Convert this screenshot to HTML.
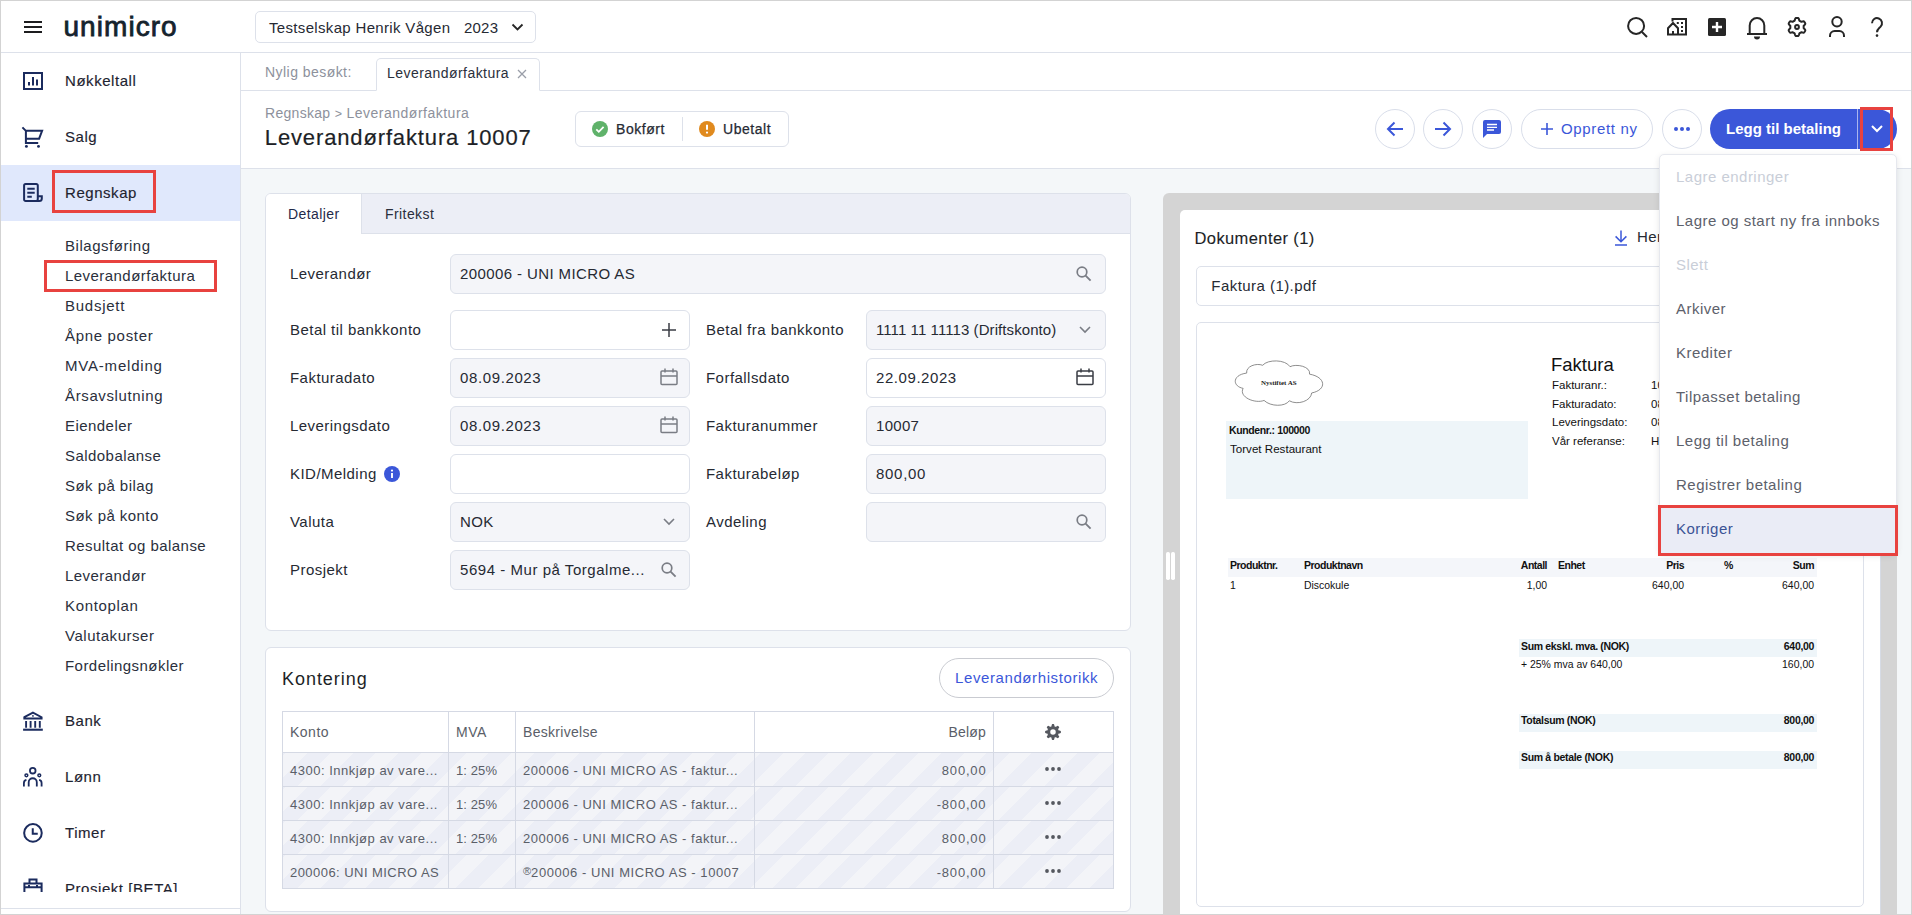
<!DOCTYPE html>
<html lang="no">
<head>
<meta charset="utf-8">
<title>Leverandørfaktura 10007</title>
<style>
*{box-sizing:border-box;margin:0;padding:0}
html,body{width:1912px;height:915px;overflow:hidden;background:#fff}
body{font-family:"Liberation Sans",sans-serif;color:#262a33;position:relative;font-size:15px}
.abs{position:absolute}
.t{position:absolute;white-space:nowrap;line-height:1}
svg{position:absolute;overflow:visible}
/* frame */
#frame{position:absolute;left:0;top:0;width:1912px;height:915px;border:1px solid #d3d3d3;z-index:100;pointer-events:none}
/* top bar */
#topbar{position:absolute;left:0;top:0;width:1912px;height:53px;background:#fff;border-bottom:1px solid #dde1ea}
#company{position:absolute;left:255px;top:11px;width:281px;height:32px;border:1px solid #dde1ea;border-radius:5px;background:#fff}
/* sidebar */
#sidebar{position:absolute;left:0;top:53px;width:240px;height:856px;background:#fff;border-bottom:1px solid #dde1ea;overflow:hidden}
#sideline{position:absolute;left:240px;top:53px;width:1px;height:862px;background:#dde1ea;z-index:5}
#sideclip{position:absolute;left:0;top:0;width:240px;height:838.7px;overflow:hidden}
.nav{position:absolute;left:65px;font-size:15px;color:#1e2330;white-space:nowrap;line-height:20px;letter-spacing:.55px;-webkit-text-stroke:.15px #1e2330;margin-top:1px}
.sub{position:absolute;left:65px;font-size:15px;color:#2a2f3c;white-space:nowrap;line-height:20px;letter-spacing:.45px;margin-top:1px}
.redbox{position:absolute;border:3px solid #e8423f;z-index:60}
/* main */
#main{position:absolute;left:241px;top:53px;width:1671px;height:862px;background:#f4f7f9;overflow:hidden}
#tabbar{position:absolute;left:0;top:0;width:1671px;height:38px;background:#fff;border-bottom:1px solid #dde1ea}
#rtab{position:absolute;left:135px;top:5px;width:164px;height:33px;border:1px solid #dde1ea;border-bottom:1px solid #fff;border-radius:5px 5px 0 0;background:#fff}
#header{position:absolute;left:0;top:38px;width:1671px;height:78px;background:#fff;border-bottom:1px solid #dde1ea}
.card{position:absolute;background:#fff;border:1px solid #dde1ea;border-radius:6px}
.inp{position:absolute;height:40px;border:1px solid #dde1ea;border-radius:6px;background:#fff}
.inp.dis{background:#f4f5f9}
.lbl{position:absolute;font-size:15px;color:#262a33;white-space:nowrap;line-height:20px;letter-spacing:.46px;margin-top:-.5px}
.val{position:absolute;left:9px;top:8.5px;font-size:15px;color:#262a33;white-space:nowrap;line-height:20px;letter-spacing:.4px}
.tdrow{margin-top:.7px}
.circ{position:absolute;width:40px;height:40px;border:1px solid #d9deea;border-radius:20px;background:#fff}
</style>
</head>
<body>
<div id="topbar">
<svg style="left:24px;top:21px" width="18" height="12" viewBox="0 0 18 12"><path d="M0 1h18M0 6h18M0 11h18" stroke="#1d1d1f" stroke-width="2" fill="none"/></svg>
<div class="t" id="logo" style="left:63.5px;top:10.8px;font-size:28px;font-weight:400;color:#15232d;letter-spacing:1.05px;line-height:32px;-webkit-text-stroke:.8px #15232d">unimicro</div>
<div id="company">
<div class="t" style="left:13px;top:6.5px;font-size:15px;line-height:17px;color:#262a33;letter-spacing:.33px">Testselskap Henrik Vågen</div>
<div class="t" style="left:208px;top:6.5px;font-size:15px;line-height:17px;color:#262a33;letter-spacing:.2px">2023</div>
<svg style="left:254.500px;top:10.500px" width="13" height="9" viewBox="0 0 13 9"><path d="M1.500 1.500l5 5 5-5" stroke="#262626" stroke-width="1.800" fill="none"/></svg>
</div>
<!-- search -->
<svg style="left:1626px;top:16px" width="22" height="22" viewBox="1626 16 22 22"><circle cx="1636.1" cy="25.9" r="8" fill="none" stroke="#262626" stroke-width="2"/><path d="M1642 32l5 5" stroke="#262626" stroke-width="2" fill="none"/></svg>
<!-- building -->
<svg style="left:1666px;top:17px" width="22" height="20" viewBox="1666 17 22 20"><path d="M1672.5 21.5V19H1686V34.6H1668V28.2L1673 23l5 5.2V34.6M1673 31v3.6" stroke="#262626" stroke-width="2" fill="none"/><path d="M1676.8 22h2v2h-2zM1681 22h2v2h-2zM1681 26h2v2h-2zM1681 30h2v2h-2z" fill="#262626"/></svg>
<!-- plus box -->
<div class="abs" style="left:1708px;top:18px;width:18px;height:18px;border-radius:1.5px;background:#262626"></div>
<svg style="left:1708px;top:18px" width="18" height="18" viewBox="0 0 18 18"><path d="M4 9h10M9 4v10" stroke="#fff" stroke-width="2.4" fill="none"/></svg>
<!-- bell -->
<svg style="left:1746px;top:16px" width="22" height="24" viewBox="1746 16 22 24"><path d="M1747 34h20M1749.7 34v-8.6a7.3 7.3 0 0 1 14.6 0V34" stroke="#262626" stroke-width="2" fill="none"/><path d="M1754 36.4h6a3 3 0 0 1-6 0z" fill="#262626"/></svg>
<!-- gear -->
<svg style="left:1786px;top:16px" width="22" height="22" viewBox="-11 -11 22 22"><path d="M0.0 -9.0L0.6 -9.0L1.2 -8.9L1.7 -8.5L2.0 -7.6L2.3 -6.6L2.6 -6.2L3.0 -6.0L3.3 -5.8L3.7 -5.6L4.1 -5.3L4.6 -5.3L5.6 -5.6L6.5 -5.7L7.1 -5.5L7.5 -5.0L7.8 -4.5L8.1 -4.0L8.3 -3.4L8.2 -2.8L7.6 -2.0L6.9 -1.4L6.6 -0.9L6.7 -0.4L6.7 -0.0L6.7 0.4L6.6 0.9L6.9 1.4L7.6 2.0L8.2 2.8L8.3 3.4L8.1 4.0L7.8 4.5L7.5 5.0L7.1 5.5L6.5 5.7L5.6 5.6L4.6 5.3L4.1 5.3L3.7 5.6L3.3 5.8L3.0 6.0L2.6 6.2L2.3 6.6L2.0 7.6L1.7 8.5L1.2 8.9L0.6 9.0L0.0 9.0L-0.6 9.0L-1.2 8.9L-1.7 8.5L-2.0 7.6L-2.3 6.6L-2.6 6.2L-3.0 6.0L-3.3 5.8L-3.7 5.6L-4.1 5.3L-4.6 5.3L-5.6 5.6L-6.5 5.7L-7.1 5.5L-7.5 5.0L-7.8 4.5L-8.1 4.0L-8.3 3.4L-8.2 2.8L-7.6 2.0L-6.9 1.4L-6.6 0.9L-6.7 0.4L-6.7 0.0L-6.7 -0.4L-6.6 -0.9L-6.9 -1.4L-7.6 -2.0L-8.2 -2.8L-8.3 -3.4L-8.1 -4.0L-7.8 -4.5L-7.5 -5.0L-7.1 -5.5L-6.5 -5.7L-5.6 -5.6L-4.6 -5.3L-4.1 -5.3L-3.7 -5.6L-3.4 -5.8L-3.0 -6.0L-2.6 -6.2L-2.3 -6.6L-2.0 -7.6L-1.7 -8.5L-1.2 -8.9L-0.6 -9.0Z" stroke="#262626" stroke-width="2" fill="none" stroke-linejoin="round"/><circle r="1.9" fill="none" stroke="#262626" stroke-width="2"/></svg>
<!-- user -->
<svg style="left:1828px;top:15px" width="18" height="23" viewBox="1828 15 18 23"><circle cx="1837" cy="21.8" r="4.7" fill="none" stroke="#262626" stroke-width="2"/><path d="M1830 37v-1.3a4.6 4.6 0 0 1 4.6-4.6h4.8a4.6 4.6 0 0 1 4.6 4.6V37" stroke="#262626" stroke-width="2" fill="none"/></svg>
<!-- help -->
<svg style="left:1870px;top:16px" width="14" height="22" viewBox="1870 16 14 22"><path d="M1872 23.2a5 5 0 1 1 8.6 3.4c-2 2-3.6 3-3.6 5.6" stroke="#262626" stroke-width="2" fill="none"/><circle cx="1877" cy="35.6" r="1.3" fill="#262626"/></svg>
</div>
<div id="sidebar"><div id="sideclip">
<div class="abs" style="left:0;top:112px;width:240px;height:56px;background:#e0e8fc"></div>
<div class="nav" style="top:17px">Nøkkeltall</div>
<div class="nav" style="top:73px">Salg</div>
<div class="nav" style="top:129px">Regnskap</div>
<div class="nav" style="top:657px">Bank</div>
<div class="nav" style="top:713px">Lønn</div>
<div class="nav" style="top:769px">Timer</div>
<div class="nav" style="top:825px">Prosjekt [BETA]</div>
<div class="sub" style="top:182px;letter-spacing:0.53px">Bilagsføring</div>
<div class="sub" style="top:212px">Leverandørfaktura</div>
<div class="sub" style="top:242px;letter-spacing:0.75px">Budsjett</div>
<div class="sub" style="top:272px;letter-spacing:0.68px">Åpne poster</div>
<div class="sub" style="top:302px;letter-spacing:0.8px">MVA-melding</div>
<div class="sub" style="top:332px;letter-spacing:0.63px">Årsavslutning</div>
<div class="sub" style="top:362px">Eiendeler</div>
<div class="sub" style="top:392px">Saldobalanse</div>
<div class="sub" style="top:422px">Søk på bilag</div>
<div class="sub" style="top:452px">Søk på konto</div>
<div class="sub" style="top:482px">Resultat og balanse</div>
<div class="sub" style="top:512px">Leverandør</div>
<div class="sub" style="top:542px;letter-spacing:0.65px">Kontoplan</div>
<div class="sub" style="top:572px;letter-spacing:0.53px">Valutakurser</div>
<div class="sub" style="top:602px">Fordelingsnøkler</div>
<svg style="left:22px;top:18px" width="22" height="20" viewBox="22 71 22 20" fill="none" stroke="#1b2b5e" stroke-width="2"><rect x="24" y="73" width="18" height="16"/><path d="M29 85.5v-3.5M33 85.5v-8.5M37 85.5v-6"/></svg>
<svg style="left:21px;top:73px" width="23" height="23" viewBox="21 126 23 23" fill="none" stroke="#1b2b5e" stroke-width="2"><path d="M22.400 127.400L25.900 130.800V143.100H38.200M25.900 130.800H42.100L39.100 138.700H25.900"/><circle cx="26.400" cy="146.400" r="1.450" fill="#1b2b5e" stroke="none"/><circle cx="38.500" cy="146.400" r="1.450" fill="#1b2b5e" stroke="none"/></svg>
<svg style="left:22px;top:129px" width="22" height="22" viewBox="22 182 22 22" fill="none" stroke="#1b2b5e" stroke-width="2"><path d="M37.800 196.200V185.400a1.500 1.500 0 0 0-1.500-1.500H25.600a1.500 1.500 0 0 0-1.500 1.500V199.600a1.500 1.500 0 0 0 1.500 1.500H39.300a2.500 2.500 0 0 0 2.500-2.500V196.200H37.800V199a2 2 0 0 1-2 2.100"/><path d="M27.300 188.800h7.400M27.300 192.800h7.400M27.300 196.700h4.500"/></svg>
<svg style="left:22px;top:656px" width="22" height="23" viewBox="22 709 22 23" fill="none" stroke="#1b2b5e" stroke-width="2"><path d="M24.300 717.200l8.650-4.600 8.650 4.600v1.300h-17.300z" stroke-width="1.900"/><path d="M26.100 721v6.800M30.600 721v6.800M35.200 721v6.800M39.800 721v6.800" stroke-width="1.900"/><path d="M23.100 729.700h19.700" stroke-width="2.100"/><circle cx="32.950" cy="715.900" r="0.850" fill="#1b2b5e" stroke="none"/></svg>
<svg style="left:22px;top:712px" width="22" height="23" viewBox="22 765 22 23" fill="none" stroke="#1b2b5e" stroke-width="2"><circle cx="32.750" cy="770.700" r="2.800" stroke-width="1.800"/><path d="M28.700 786.600v-4.300a4.050 4.050 0 0 1 8.100 0v4.300" stroke-width="1.800"/><circle cx="26.400" cy="775.300" r="1.400" stroke-width="1.500"/><circle cx="39.300" cy="775.300" r="1.400" stroke-width="1.500"/><path d="M23.900 786.600v-3.700a3.200 3.200 0 0 1 2.500-3.100M41.600 786.600v-3.700a3.200 3.200 0 0 0-2.500-3.100" stroke-width="1.800"/></svg>
<svg style="left:22px;top:768px" width="22" height="23" viewBox="22 821 22 23" fill="none" stroke="#1b2b5e" stroke-width="2"><circle cx="32.950" cy="832.900" r="8.800"/><path d="M32.750 828.300v5.400h5"/></svg>
<svg style="left:22px;top:824px" width="22" height="22" viewBox="22 877 22 22" fill="none" stroke="#1b2b5e" stroke-width="2"><path d="M24.400 883.400h17.200v12h-17.200zM29.500 883.400v-4h7v4M24.400 887.200h17.200M29 885v2.200M37 885v2.200"/></svg>
</div></div>
<div id="sideline"></div>
<div id="main">
<div id="tabbar">
<div class="t" style="left:24px;top:11px;font-size:14px;line-height:17px;color:#8d919c;letter-spacing:.45px">Nylig besøkt:</div>
<div id="rtab"><div class="t" style="left:10px;top:6px;font-size:14px;line-height:17px;color:#2a2f3c;letter-spacing:.45px">Leverandørfaktura</div><svg style="left:140px;top:10px" width="10" height="10" viewBox="0 0 10 10"><path d="M1 1l8 8M9 1l-8 8" stroke="#9a9ea8" stroke-width="1.3" fill="none"/></svg></div>
</div>
<div id="header">
<div class="t" style="left:24px;top:13px;font-size:14px;line-height:18px;color:#8d919c;letter-spacing:.3px">Regnskap <span style="font-size:12.500px;position:relative;top:-.3px">&gt;</span> <span style="letter-spacing:.5px">Leverandørfaktura</span></div>
<div class="t" style="left:23.8px;top:33px;font-size:22px;line-height:28px;color:#1d1f26;letter-spacing:.86px;-webkit-text-stroke:.2px #1d1f26">Leverandørfaktura 10007</div>
<div class="abs" style="left:334px;top:20px;width:214px;height:36px;border:1px solid #dde1ea;border-radius:6px"></div>
<svg style="left:351px;top:30px" width="16" height="16" viewBox="0 0 16 16"><circle cx="8" cy="8" r="8" fill="#5fb26a"/><path d="M4.300 8.300l2.500 2.500 4.800-5" stroke="#fff" stroke-width="1.800" fill="none"/></svg>
<div class="t" style="left:375px;top:29px;font-size:14px;line-height:18px;color:#262a33;letter-spacing:.55px;-webkit-text-stroke:.25px #262a33">Bokført</div>
<div class="abs" style="left:441px;top:26px;width:1px;height:24px;background:#dde1ea"></div>
<svg style="left:457.7px;top:30px" width="16" height="16" viewBox="0 0 16 16"><circle cx="8" cy="8" r="8" fill="#e08a1e"/><path d="M8 3.800v5" stroke="#fff" stroke-width="2" fill="none"/><circle cx="8" cy="11.600" r="1.100" fill="#fff"/></svg>
<div class="t" style="left:482px;top:29px;font-size:14px;line-height:18px;color:#262a33;letter-spacing:.55px;-webkit-text-stroke:.25px #262a33">Ubetalt</div>
<div class="circ" style="left:1134px;top:18px"></div>
<div class="circ" style="left:1182px;top:18px"></div>
<div class="circ" style="left:1231px;top:18px"></div>
<div class="circ" style="left:1421px;top:18px"></div>
<svg style="left:1145px;top:30px" width="18" height="16" viewBox="0 0 18 16"><path d="M17 8H2M8.500 1.500L2 8l6.500 6.500" stroke="#3b57d9" stroke-width="2" fill="none"/></svg>
<svg style="left:1193px;top:30px" width="18" height="16" viewBox="0 0 18 16"><path d="M1 8h15M9.500 1.500L16 8l-6.500 6.500" stroke="#3b57d9" stroke-width="2" fill="none"/></svg>
<svg style="left:1242px;top:29px" width="18" height="18" viewBox="0 0 18 18"><path d="M2 0h14a2 2 0 0 1 2 2v10a2 2 0 0 1-2 2H4l-4 4V2a2 2 0 0 1 2-2z" fill="#3b57d9"/><path d="M4 4.500h10M4 7.300h10M4 10h7" stroke="#fff" stroke-width="1.300"/></svg>
<div class="abs" style="left:1280px;top:18px;width:132px;height:40px;border:1px solid #d9deea;border-radius:20px;background:#fff"></div>
<svg style="left:1300px;top:32px" width="12" height="12" viewBox="0 0 12 12"><path d="M6 0v12M0 6h12" stroke="#3b57d9" stroke-width="1.600"/></svg>
<div class="t" style="left:1320px;top:28px;font-size:15px;line-height:20px;color:#3b57d9;letter-spacing:.65px">Opprett ny</div>
<svg style="left:1433px;top:36px" width="16" height="4" viewBox="0 0 16 4"><circle cx="2" cy="2" r="2" fill="#3b57d9"/><circle cx="8" cy="2" r="2" fill="#3b57d9"/><circle cx="14" cy="2" r="2" fill="#3b57d9"/></svg>
<div class="abs" style="left:1469px;top:18px;width:187px;height:40px;border-radius:20px;background:#3b57d9"></div>
<div class="abs" style="left:1616px;top:18px;width:1px;height:40px;background:#aab6ee"></div>
<div class="t" style="left:1485px;top:28px;font-size:15px;font-weight:700;line-height:20px;color:#fff;letter-spacing:0">Legg til betaling</div>
<svg style="left:1630px;top:34px" width="12" height="8" viewBox="0 0 12 8"><path d="M1 1l5 5 5-5" stroke="#fff" stroke-width="2" fill="none"/></svg>
</div>
<div class="card" style="left:24px;top:140px;width:866px;height:438px;overflow:hidden">
<div class="abs" style="left:0;top:0;width:864px;height:40px;background:#eceef6;border-bottom:1px solid #dde1ea"></div>
<div class="abs" style="left:0;top:0;width:96px;height:40px;background:#fff;border-right:1px solid #dde1ea"></div>
<div class="t" style="left:22px;top:10px;font-size:14px;line-height:20px;color:#1f2a4a;letter-spacing:.42px">Detaljer</div>
<div class="t" style="left:119px;top:10px;font-size:14px;line-height:20px;color:#2a2f3c;letter-spacing:.42px">Fritekst</div>
<div class="lbl" style="left:24px;top:70px">Leverandør</div>
<div class="lbl" style="left:24px;top:126px">Betal til bankkonto</div>
<div class="lbl" style="left:24px;top:174px">Fakturadato</div>
<div class="lbl" style="left:24px;top:222px">Leveringsdato</div>
<div class="lbl" style="left:24px;top:270px">KID/Melding</div>
<div class="lbl" style="left:24px;top:318px">Valuta</div>
<div class="lbl" style="left:24px;top:366px">Prosjekt</div>
<div class="lbl" style="left:440px;top:126px">Betal fra bankkonto</div>
<div class="lbl" style="left:440px;top:174px">Forfallsdato</div>
<div class="lbl" style="left:440px;top:222px">Fakturanummer</div>
<div class="lbl" style="left:440px;top:270px">Fakturabeløp</div>
<div class="lbl" style="left:440px;top:318px">Avdeling</div>
<div class="inp dis" style="left:184px;top:60px;width:656px"><div class="val">200006 - UNI MICRO AS</div></div><svg style="left:810px;top:72px" width="16" height="16" viewBox="0 0 16 16"><circle cx="6" cy="6" r="4.800" fill="none" stroke="#7a7d85" stroke-width="1.700"/><path d="M9.600 9.600l5 5" stroke="#7a7d85" stroke-width="1.800"/></svg>
<div class="inp" style="left:184px;top:116px;width:240px"><div class="val"></div></div><svg style="left:396px;top:129px" width="14" height="14" viewBox="0 0 14 14"><path d="M7 0v14M0 7h14" stroke="#3a3d44" stroke-width="1.500"/></svg>
<div class="inp dis" style="left:184px;top:164px;width:240px"><div class="val" style="letter-spacing:.62px">08.09.2023</div></div><svg style="left:394px;top:174px" width="18" height="18" viewBox="0 0 18 18" fill="none" stroke="#7a7d85" stroke-width="1.500"><rect x="1" y="3" width="16" height="13.500" rx="1"/><path d="M1 8h16M5 0.500v4M13 0.500v4"/></svg>
<div class="inp dis" style="left:184px;top:212px;width:240px"><div class="val" style="letter-spacing:.62px">08.09.2023</div></div><svg style="left:394px;top:222px" width="18" height="18" viewBox="0 0 18 18" fill="none" stroke="#7a7d85" stroke-width="1.500"><rect x="1" y="3" width="16" height="13.500" rx="1"/><path d="M1 8h16M5 0.500v4M13 0.500v4"/></svg>
<div class="inp" style="left:184px;top:260px;width:240px"><div class="val"></div></div>
<div class="inp dis" style="left:184px;top:308px;width:240px"><div class="val">NOK</div></div><svg style="left:397px;top:324px" width="12" height="8" viewBox="0 0 12 8"><path d="M1 1l5 5 5-5" stroke="#7a7d85" stroke-width="1.600" fill="none"/></svg>
<div class="inp dis" style="left:184px;top:356px;width:240px"><div class="val" style="letter-spacing:.54px">5694 - Mur på Torgalme...</div></div><svg style="left:395px;top:368px" width="16" height="16" viewBox="0 0 16 16"><circle cx="6" cy="6" r="4.800" fill="none" stroke="#7a7d85" stroke-width="1.700"/><path d="M9.600 9.600l5 5" stroke="#7a7d85" stroke-width="1.800"/></svg>
<div class="inp dis" style="left:600px;top:116px;width:240px"><div class="val" style="letter-spacing:.08px">1111 11 11113 (Driftskonto)</div></div><svg style="left:813px;top:132px" width="12" height="8" viewBox="0 0 12 8"><path d="M1 1l5 5 5-5" stroke="#7a7d85" stroke-width="1.600" fill="none"/></svg>
<div class="inp" style="left:600px;top:164px;width:240px"><div class="val" style="letter-spacing:.57px">22.09.2023</div></div><svg style="left:810px;top:174px" width="18" height="18" viewBox="0 0 18 18" fill="none" stroke="#3a3d44" stroke-width="1.500"><rect x="1" y="3" width="16" height="13.500" rx="1"/><path d="M1 8h16M5 0.500v4M13 0.500v4"/></svg>
<div class="inp dis" style="left:600px;top:212px;width:240px"><div class="val" style="letter-spacing:.3px">10007</div></div>
<div class="inp dis" style="left:600px;top:260px;width:240px"><div class="val" style="letter-spacing:.7px">800,00</div></div>
<div class="inp dis" style="left:600px;top:308px;width:240px"><div class="val"></div></div><svg style="left:810px;top:320px" width="16" height="16" viewBox="0 0 16 16"><circle cx="6" cy="6" r="4.800" fill="none" stroke="#7a7d85" stroke-width="1.700"/><path d="M9.600 9.600l5 5" stroke="#7a7d85" stroke-width="1.800"/></svg>
<svg style="left:118px;top:272px" width="16" height="16" viewBox="0 0 16 16"><circle cx="8" cy="8" r="8" fill="#3b57d9"/><circle cx="8" cy="4.600" r="1.100" fill="#fff"/><path d="M8 7v5" stroke="#fff" stroke-width="1.900"/></svg>
</div>
<div class="card" style="left:24px;top:594px;width:866px;height:265px;overflow:hidden">
<div class="t" style="left:16px;top:19px;font-size:18px;line-height:24px;color:#1d1f26;letter-spacing:.95px">Kontering</div>
<div class="abs" style="left:673px;top:10px;width:175px;height:40px;border:1px solid #c9cbd1;border-radius:20px;background:#fff"></div>
<div class="t" style="left:689px;top:20px;font-size:15px;line-height:20px;color:#3b57d9;letter-spacing:.6px">Leverandørhistorikk</div>
<div id="tbl" style="position:absolute;overflow:hidden;left:16px;top:63px;width:832px;height:178px;border:1px solid #d5d9e4;background:#fff">
<div class="abs" style="left:-42px;top:40px;width:872px;height:34px;background:repeating-linear-gradient(135deg,#f3f4f8 0 16px,#eceef6 16px 32px)"></div><div class="abs" style="left:-42px;top:74px;width:872px;height:34px;background:repeating-linear-gradient(135deg,#f3f4f8 0 16px,#eceef6 16px 32px)"></div><div class="abs" style="left:-42px;top:108px;width:872px;height:34px;background:repeating-linear-gradient(135deg,#f3f4f8 0 16px,#eceef6 16px 32px)"></div><div class="abs" style="left:-42px;top:142px;width:872px;height:34px;background:repeating-linear-gradient(135deg,#f3f4f8 0 16px,#eceef6 16px 32px)"></div>
<div class="abs" style="left:165px;top:0;width:1px;height:176px;background:#d5d9e4"></div>
<div class="abs" style="left:232px;top:0;width:1px;height:176px;background:#d5d9e4"></div>
<div class="abs" style="left:471px;top:0;width:1px;height:176px;background:#d5d9e4"></div>
<div class="abs" style="left:710px;top:0;width:1px;height:176px;background:#d5d9e4"></div>
<div class="abs" style="left:0;top:40px;width:830px;height:1px;background:#d5d9e4"></div>
<div class="abs" style="left:0;top:74px;width:830px;height:1px;background:#d5d9e4"></div>
<div class="abs" style="left:0;top:108px;width:830px;height:1px;background:#d5d9e4"></div>
<div class="abs" style="left:0;top:142px;width:830px;height:1px;background:#d5d9e4"></div>
<div class="t" style="left:7px;top:11px;font-size:14px;line-height:18px;color:#5a5e68;letter-spacing:.5px">Konto</div>
<div class="t" style="left:173px;top:11px;font-size:14px;line-height:18px;color:#5a5e68;letter-spacing:.5px">MVA</div>
<div class="t" style="left:240px;top:11px;font-size:14px;line-height:18px;color:#5a5e68;letter-spacing:.3px">Beskrivelse</div>
<div class="t" style="right:127px;top:11px;font-size:14px;line-height:18px;color:#5a5e68;letter-spacing:.2px">Beløp</div>
<div class="t" style="left:7px;top:49px;font-size:13px;line-height:18px;color:#5a5e68;margin-top:.7px;letter-spacing:.5px">4300: Innkjøp av vare...</div>
<div class="t" style="left:173px;top:49px;font-size:13px;line-height:18px;color:#5a5e68;margin-top:.7px;letter-spacing:.1px">1: 25%</div>
<div class="t" style="left:240px;top:49px;font-size:13px;line-height:18px;color:#5a5e68;margin-top:.7px;letter-spacing:.5px">200006 - UNI MICRO AS - faktur...</div>
<div class="t" style="right:126.6px;top:49px;font-size:13px;line-height:18px;color:#5a5e68;margin-top:.7px;letter-spacing:.8px">800,00</div>
<svg style="left:762px;top:55px" width="16" height="4" viewBox="0 0 16 4"><circle cx="2" cy="2" r="1.900" fill="#55585f"/><circle cx="8" cy="2" r="1.900" fill="#55585f"/><circle cx="14" cy="2" r="1.900" fill="#55585f"/></svg>
<div class="t" style="left:7px;top:83px;font-size:13px;line-height:18px;color:#5a5e68;margin-top:.7px;letter-spacing:.5px">4300: Innkjøp av vare...</div>
<div class="t" style="left:173px;top:83px;font-size:13px;line-height:18px;color:#5a5e68;margin-top:.7px;letter-spacing:.1px">1: 25%</div>
<div class="t" style="left:240px;top:83px;font-size:13px;line-height:18px;color:#5a5e68;margin-top:.7px;letter-spacing:.5px">200006 - UNI MICRO AS - faktur...</div>
<div class="t" style="right:126.6px;top:83px;font-size:13px;line-height:18px;color:#5a5e68;margin-top:.7px;letter-spacing:.8px">-800,00</div>
<svg style="left:762px;top:89px" width="16" height="4" viewBox="0 0 16 4"><circle cx="2" cy="2" r="1.900" fill="#55585f"/><circle cx="8" cy="2" r="1.900" fill="#55585f"/><circle cx="14" cy="2" r="1.900" fill="#55585f"/></svg>
<div class="t" style="left:7px;top:117px;font-size:13px;line-height:18px;color:#5a5e68;margin-top:.7px;letter-spacing:.5px">4300: Innkjøp av vare...</div>
<div class="t" style="left:173px;top:117px;font-size:13px;line-height:18px;color:#5a5e68;margin-top:.7px;letter-spacing:.1px">1: 25%</div>
<div class="t" style="left:240px;top:117px;font-size:13px;line-height:18px;color:#5a5e68;margin-top:.7px;letter-spacing:.5px">200006 - UNI MICRO AS - faktur...</div>
<div class="t" style="right:126.6px;top:117px;font-size:13px;line-height:18px;color:#5a5e68;margin-top:.7px;letter-spacing:.8px">800,00</div>
<svg style="left:762px;top:123px" width="16" height="4" viewBox="0 0 16 4"><circle cx="2" cy="2" r="1.900" fill="#55585f"/><circle cx="8" cy="2" r="1.900" fill="#55585f"/><circle cx="14" cy="2" r="1.900" fill="#55585f"/></svg>
<div class="t" style="left:7px;top:151px;font-size:13px;line-height:18px;color:#5a5e68;margin-top:.7px;letter-spacing:.45px">200006: UNI MICRO AS</div>
<div class="t" style="left:240px;top:151px;font-size:13px;line-height:18px;color:#5a5e68;margin-top:.7px;letter-spacing:.55px"><span style="font-size:11px;position:relative;top:-1.500px;letter-spacing:0;line-height:0">®</span>200006 - UNI MICRO AS - 10007</div>
<div class="t" style="right:126.6px;top:151px;font-size:13px;line-height:18px;color:#5a5e68;margin-top:.7px;letter-spacing:.8px">-800,00</div>
<svg style="left:762px;top:157px" width="16" height="4" viewBox="0 0 16 4"><circle cx="2" cy="2" r="1.900" fill="#55585f"/><circle cx="8" cy="2" r="1.900" fill="#55585f"/><circle cx="14" cy="2" r="1.900" fill="#55585f"/></svg>
<svg style="left:761px;top:11px" width="18" height="18" viewBox="-9.800 -9.800 19.600 19.600"><path d="M0.0 -8.6L0.4 -8.6L0.8 -8.6L1.2 -8.3L1.5 -7.3L1.6 -6.3L1.8 -6.0L2.1 -5.9L2.4 -5.8L2.7 -5.7L3.0 -5.6L3.3 -5.6L4.1 -6.2L5.0 -6.8L5.5 -6.6L5.8 -6.4L6.1 -6.1L6.4 -5.8L6.6 -5.5L6.8 -5.0L6.2 -4.1L5.6 -3.3L5.6 -3.0L5.7 -2.7L5.8 -2.4L5.9 -2.1L6.0 -1.8L6.3 -1.6L7.3 -1.5L8.3 -1.2L8.6 -0.8L8.6 -0.4L8.6 -0.0L8.6 0.4L8.6 0.8L8.3 1.2L7.3 1.5L6.3 1.6L6.0 1.8L5.9 2.1L5.8 2.4L5.7 2.7L5.6 3.0L5.6 3.3L6.2 4.1L6.8 5.0L6.6 5.5L6.4 5.8L6.1 6.1L5.8 6.4L5.5 6.6L5.0 6.8L4.1 6.2L3.3 5.6L3.0 5.6L2.7 5.7L2.4 5.8L2.1 5.9L1.8 6.0L1.6 6.3L1.5 7.3L1.2 8.3L0.8 8.6L0.4 8.6L0.0 8.6L-0.4 8.6L-0.8 8.6L-1.2 8.3L-1.5 7.3L-1.6 6.3L-1.8 6.0L-2.1 5.9L-2.4 5.8L-2.7 5.7L-3.0 5.6L-3.3 5.6L-4.1 6.2L-5.0 6.8L-5.5 6.6L-5.8 6.4L-6.1 6.1L-6.4 5.8L-6.6 5.5L-6.8 5.0L-6.2 4.1L-5.6 3.3L-5.6 3.0L-5.7 2.7L-5.8 2.4L-5.9 2.1L-6.0 1.8L-6.3 1.6L-7.3 1.5L-8.3 1.2L-8.6 0.8L-8.6 0.4L-8.6 0.0L-8.6 -0.4L-8.6 -0.8L-8.3 -1.2L-7.3 -1.5L-6.3 -1.6L-6.0 -1.8L-5.9 -2.1L-5.8 -2.4L-5.7 -2.7L-5.6 -3.0L-5.6 -3.3L-6.2 -4.1L-6.8 -5.0L-6.6 -5.5L-6.4 -5.8L-6.1 -6.1L-5.8 -6.4L-5.5 -6.6L-5.0 -6.8L-4.1 -6.2L-3.3 -5.6L-3.0 -5.6L-2.7 -5.7L-2.4 -5.8L-2.1 -5.9L-1.8 -6.0L-1.6 -6.3L-1.5 -7.3L-1.2 -8.3L-0.8 -8.6L-0.4 -8.6ZM0 -3A3 3 0 1 0 0 3A3 3 0 1 0 0 -3Z" fill="#55585f" fill-rule="evenodd"/></svg>
</div>
</div>
<div class="abs" style="left:922px;top:140px;width:734px;height:740px;background:#d4d4d4;border-radius:6px 0 0 0"></div>
<div class="abs" style="left:925px;top:498.700px;width:3.700px;height:28.500px;background:#fff;border-radius:1.800px"></div>
<div class="abs" style="left:929.900px;top:498.700px;width:3.700px;height:28.500px;background:#fff;border-radius:1.800px"></div>
<div class="abs" style="left:939px;top:157px;width:701px;height:720px;background:#fff;border-radius:5px 0 0 0;overflow:hidden;border-right:1px solid #d6dbe5">
<div class="t" style="left:15px;top:16px;font-size:16.500px;line-height:24px;color:#1d1f26;letter-spacing:.4px;-webkit-text-stroke:.1px #1d1f26;margin:0 0 0 -.5px">Dokumenter (1)</div>
<svg style="left:434px;top:20px" width="14" height="16" viewBox="0 0 14 16" fill="none" stroke="#3b57d9" stroke-width="1.500"><path d="M7 0.500v11M1.600 6.400l5.400 5.400 5.400-5.400M1 15h12"/></svg>
<div class="t" style="left:457px;top:17px;font-size:15px;line-height:20px;color:#262a33;letter-spacing:.4px">Hent</div>
<div class="abs" style="left:16px;top:56px;width:669px;height:40px;border:1px solid #dde1ea;border-radius:5px"></div>
<div class="t" style="left:32px;top:66px;font-size:15px;line-height:20px;color:#262a33;letter-spacing:.45px;margin-left:-.7px">Faktura (1).pdf</div>
<div class="abs" style="left:16px;top:112px;width:668px;height:585px;border:1px solid #dde1ea;border-radius:5px;background:#fff"></div>
<svg style="left:45px;top:140px" width="110" height="65" viewBox="0 0 1548 915"><path d="M305 325C290 230 440 180 530 215C600 130 850 130 915 235C1000 190 1210 230 1190 340C1420 380 1440 560 1220 605C1210 720 1020 780 905 715C850 800 640 800 550 710C420 760 190 660 255 540C100 510 100 350 305 325Z" fill="#fff" stroke="#6e6e6e" stroke-width="11"/><text x="757" y="490" font-family="Liberation Serif,serif" font-weight="700" font-size="98" text-anchor="middle" fill="#222">Nystiftet AS</text></svg>
<div class="t" style="left:371px;top:143px;font-family:'Liberation Sans',sans-serif;color:#111;font-size:18.500px;line-height:22px;margin-top:.8px">Faktura</div>
<div class="t" style="left:372px;top:169.0px;font-family:'Liberation Sans',sans-serif;color:#111;font-size:11.500px;line-height:13px">Fakturanr.:</div>
<div class="t" style="left:471px;top:169.0px;font-family:'Liberation Sans',sans-serif;color:#111;font-size:11.500px;line-height:13px">10007</div>
<div class="t" style="left:372px;top:187.5px;font-family:'Liberation Sans',sans-serif;color:#111;font-size:11.500px;line-height:13px">Fakturadato:</div>
<div class="t" style="left:471px;top:187.5px;font-family:'Liberation Sans',sans-serif;color:#111;font-size:11.500px;line-height:13px">08.09.2023</div>
<div class="t" style="left:372px;top:206.0px;font-family:'Liberation Sans',sans-serif;color:#111;font-size:11.500px;line-height:13px">Leveringsdato:</div>
<div class="t" style="left:471px;top:206.0px;font-family:'Liberation Sans',sans-serif;color:#111;font-size:11.500px;line-height:13px">08.09.2023</div>
<div class="t" style="left:372px;top:224.5px;font-family:'Liberation Sans',sans-serif;color:#111;font-size:11.500px;line-height:13px">Vår referanse:</div>
<div class="t" style="left:471px;top:224.5px;font-family:'Liberation Sans',sans-serif;color:#111;font-size:11.500px;line-height:13px">Henrik Vågen</div>
<div class="abs" style="left:46px;top:210px;width:302px;height:78px;margin-top:.5px;background:#eef5f9"></div>
<div class="t" style="left:49px;top:214px;font-family:'Liberation Sans',sans-serif;color:#111;font-size:10.500px;font-weight:700;line-height:13px;letter-spacing:-0.37px">Kundenr.: 100000</div>
<div class="t" style="left:50px;top:232px;font-family:'Liberation Sans',sans-serif;color:#111;font-size:11.600px;line-height:14px">Torvet Restaurant</div>
<div class="abs" style="left:48px;top:348px;width:589px;height:19px;background:#f4f6fa"></div>
<div class="t" style="left:50px;top:348.7px;font-family:'Liberation Sans',sans-serif;color:#111;font-size:10.500px;font-weight:700;line-height:13px;letter-spacing:-0.5px">Produktnr.</div>
<div class="t" style="left:124px;top:348.7px;font-family:'Liberation Sans',sans-serif;color:#111;font-size:10.500px;font-weight:700;line-height:13px;letter-spacing:-0.5px">Produktnavn</div>
<div class="t" style="right:333px;top:348.7px;font-family:'Liberation Sans',sans-serif;color:#111;font-size:10.500px;font-weight:700;line-height:13px;letter-spacing:-0.5px">Antall</div>
<div class="t" style="left:378px;top:348.7px;font-family:'Liberation Sans',sans-serif;color:#111;font-size:10.500px;font-weight:700;line-height:13px;letter-spacing:-0.5px">Enhet</div>
<div class="t" style="right:196px;top:348.7px;font-family:'Liberation Sans',sans-serif;color:#111;font-size:10.500px;font-weight:700;line-height:13px;letter-spacing:-0.5px">Pris</div>
<div class="t" style="left:544px;top:348.7px;font-family:'Liberation Sans',sans-serif;color:#111;font-size:10.500px;font-weight:700;line-height:13px;letter-spacing:-0.5px">%</div>
<div class="t" style="right:66px;top:348.7px;font-family:'Liberation Sans',sans-serif;color:#111;font-size:10.500px;font-weight:700;line-height:13px;letter-spacing:-0.5px">Sum</div>
<div class="t" style="left:50px;top:368.7px;font-family:'Liberation Sans',sans-serif;color:#111;font-size:10.450px;line-height:13px">1</div>
<div class="t" style="left:124px;top:368.7px;font-family:'Liberation Sans',sans-serif;color:#111;font-size:10.450px;line-height:13px">Discokule</div>
<div class="t" style="right:333px;top:368.7px;font-family:'Liberation Sans',sans-serif;color:#111;font-size:10.450px;line-height:13px">1,00</div>
<div class="t" style="right:196px;top:368.7px;font-family:'Liberation Sans',sans-serif;color:#111;font-size:10.450px;line-height:13px">640,00</div>
<div class="t" style="right:66px;top:368.7px;font-family:'Liberation Sans',sans-serif;color:#111;font-size:10.450px;line-height:13px">640,00</div>
<div class="abs" style="left:339px;top:429px;width:298px;height:18px;background:#eef5f9"></div>
<div class="t" style="left:341px;top:429.6px;font-family:'Liberation Sans',sans-serif;color:#111;font-size:10.500px;font-weight:700;line-height:13px;letter-spacing:-0.33px">Sum ekskl. mva. (NOK)</div>
<div class="t" style="right:66px;top:429.6px;font-family:'Liberation Sans',sans-serif;color:#111;font-size:10.500px;font-weight:700;line-height:13px;letter-spacing:-0.33px">640,00</div>
<div class="t" style="left:341px;top:448.1px;font-family:'Liberation Sans',sans-serif;color:#111;font-size:10.450px;line-height:13px">+ 25% mva av 640,00</div>
<div class="t" style="right:66px;top:448.1px;font-family:'Liberation Sans',sans-serif;color:#111;font-size:10.450px;line-height:13px">160,00</div>
<div class="abs" style="left:339px;top:503.5px;width:298px;height:18px;background:#eef5f9"></div>
<div class="t" style="left:341px;top:503.7px;font-family:'Liberation Sans',sans-serif;color:#111;font-size:10.500px;font-weight:700;line-height:13px;letter-spacing:-0.33px">Totalsum (NOK)</div>
<div class="t" style="right:66px;top:503.7px;font-family:'Liberation Sans',sans-serif;color:#111;font-size:10.500px;font-weight:700;line-height:13px;letter-spacing:-0.33px">800,00</div>
<div class="abs" style="left:339px;top:541px;width:298px;height:18px;background:#eef5f9"></div>
<div class="t" style="left:341px;top:541.2px;font-family:'Liberation Sans',sans-serif;color:#111;font-size:10.500px;font-weight:700;line-height:13px;letter-spacing:-0.33px">Sum å betale (NOK)</div>
<div class="t" style="right:66px;top:541.2px;font-family:'Liberation Sans',sans-serif;color:#111;font-size:10.500px;font-weight:700;line-height:13px;letter-spacing:-0.33px">800,00</div>
</div>
<div class="abs" id="dd" style="left:1418px;top:101px;width:238px;height:400px;background:#fff;border:1px solid #e6e8ee;border-radius:5px;box-shadow:0 2px 6px rgba(0,0,0,.10);z-index:50">
<div class="t" style="left:16px;top:12.3px;font-size:15px;line-height:20px;color:#c9ced8;letter-spacing:.48px">Lagre endringer</div>
<div class="t" style="left:16px;top:56.3px;font-size:15px;line-height:20px;color:#5d616b;letter-spacing:.48px">Lagre og start ny fra innboks</div>
<div class="t" style="left:16px;top:100.3px;font-size:15px;line-height:20px;color:#c9ced8;letter-spacing:.48px">Slett</div>
<div class="t" style="left:16px;top:144.3px;font-size:15px;line-height:20px;color:#5d616b;letter-spacing:.48px">Arkiver</div>
<div class="t" style="left:16px;top:188.3px;font-size:15px;line-height:20px;color:#5d616b;letter-spacing:.48px">Krediter</div>
<div class="t" style="left:16px;top:232.3px;font-size:15px;line-height:20px;color:#5d616b;letter-spacing:.48px">Tilpasset betaling</div>
<div class="t" style="left:16px;top:276.3px;font-size:15px;line-height:20px;color:#5d616b;letter-spacing:.48px">Legg til betaling</div>
<div class="t" style="left:16px;top:320.3px;font-size:15px;line-height:20px;color:#5d616b;letter-spacing:.48px">Registrer betaling</div>
<div class="abs" style="left:0;top:352px;width:236px;height:46px;background:#eaecf6"></div>
<div class="t" style="left:16px;top:364.3px;font-size:15px;line-height:20px;color:#3a5395;letter-spacing:.48px">Korriger</div>
</div>
</div>
<div class="redbox" style="left:52px;top:170px;width:104px;height:43px"></div>
<div class="redbox" style="left:44px;top:260px;width:173px;height:32px"></div>
<div class="redbox" style="left:1860px;top:107px;width:33px;height:44px"></div>
<div class="redbox" style="left:1658px;top:505px;width:240px;height:51px"></div>
<div id="frame"></div>
</body>
</html>
